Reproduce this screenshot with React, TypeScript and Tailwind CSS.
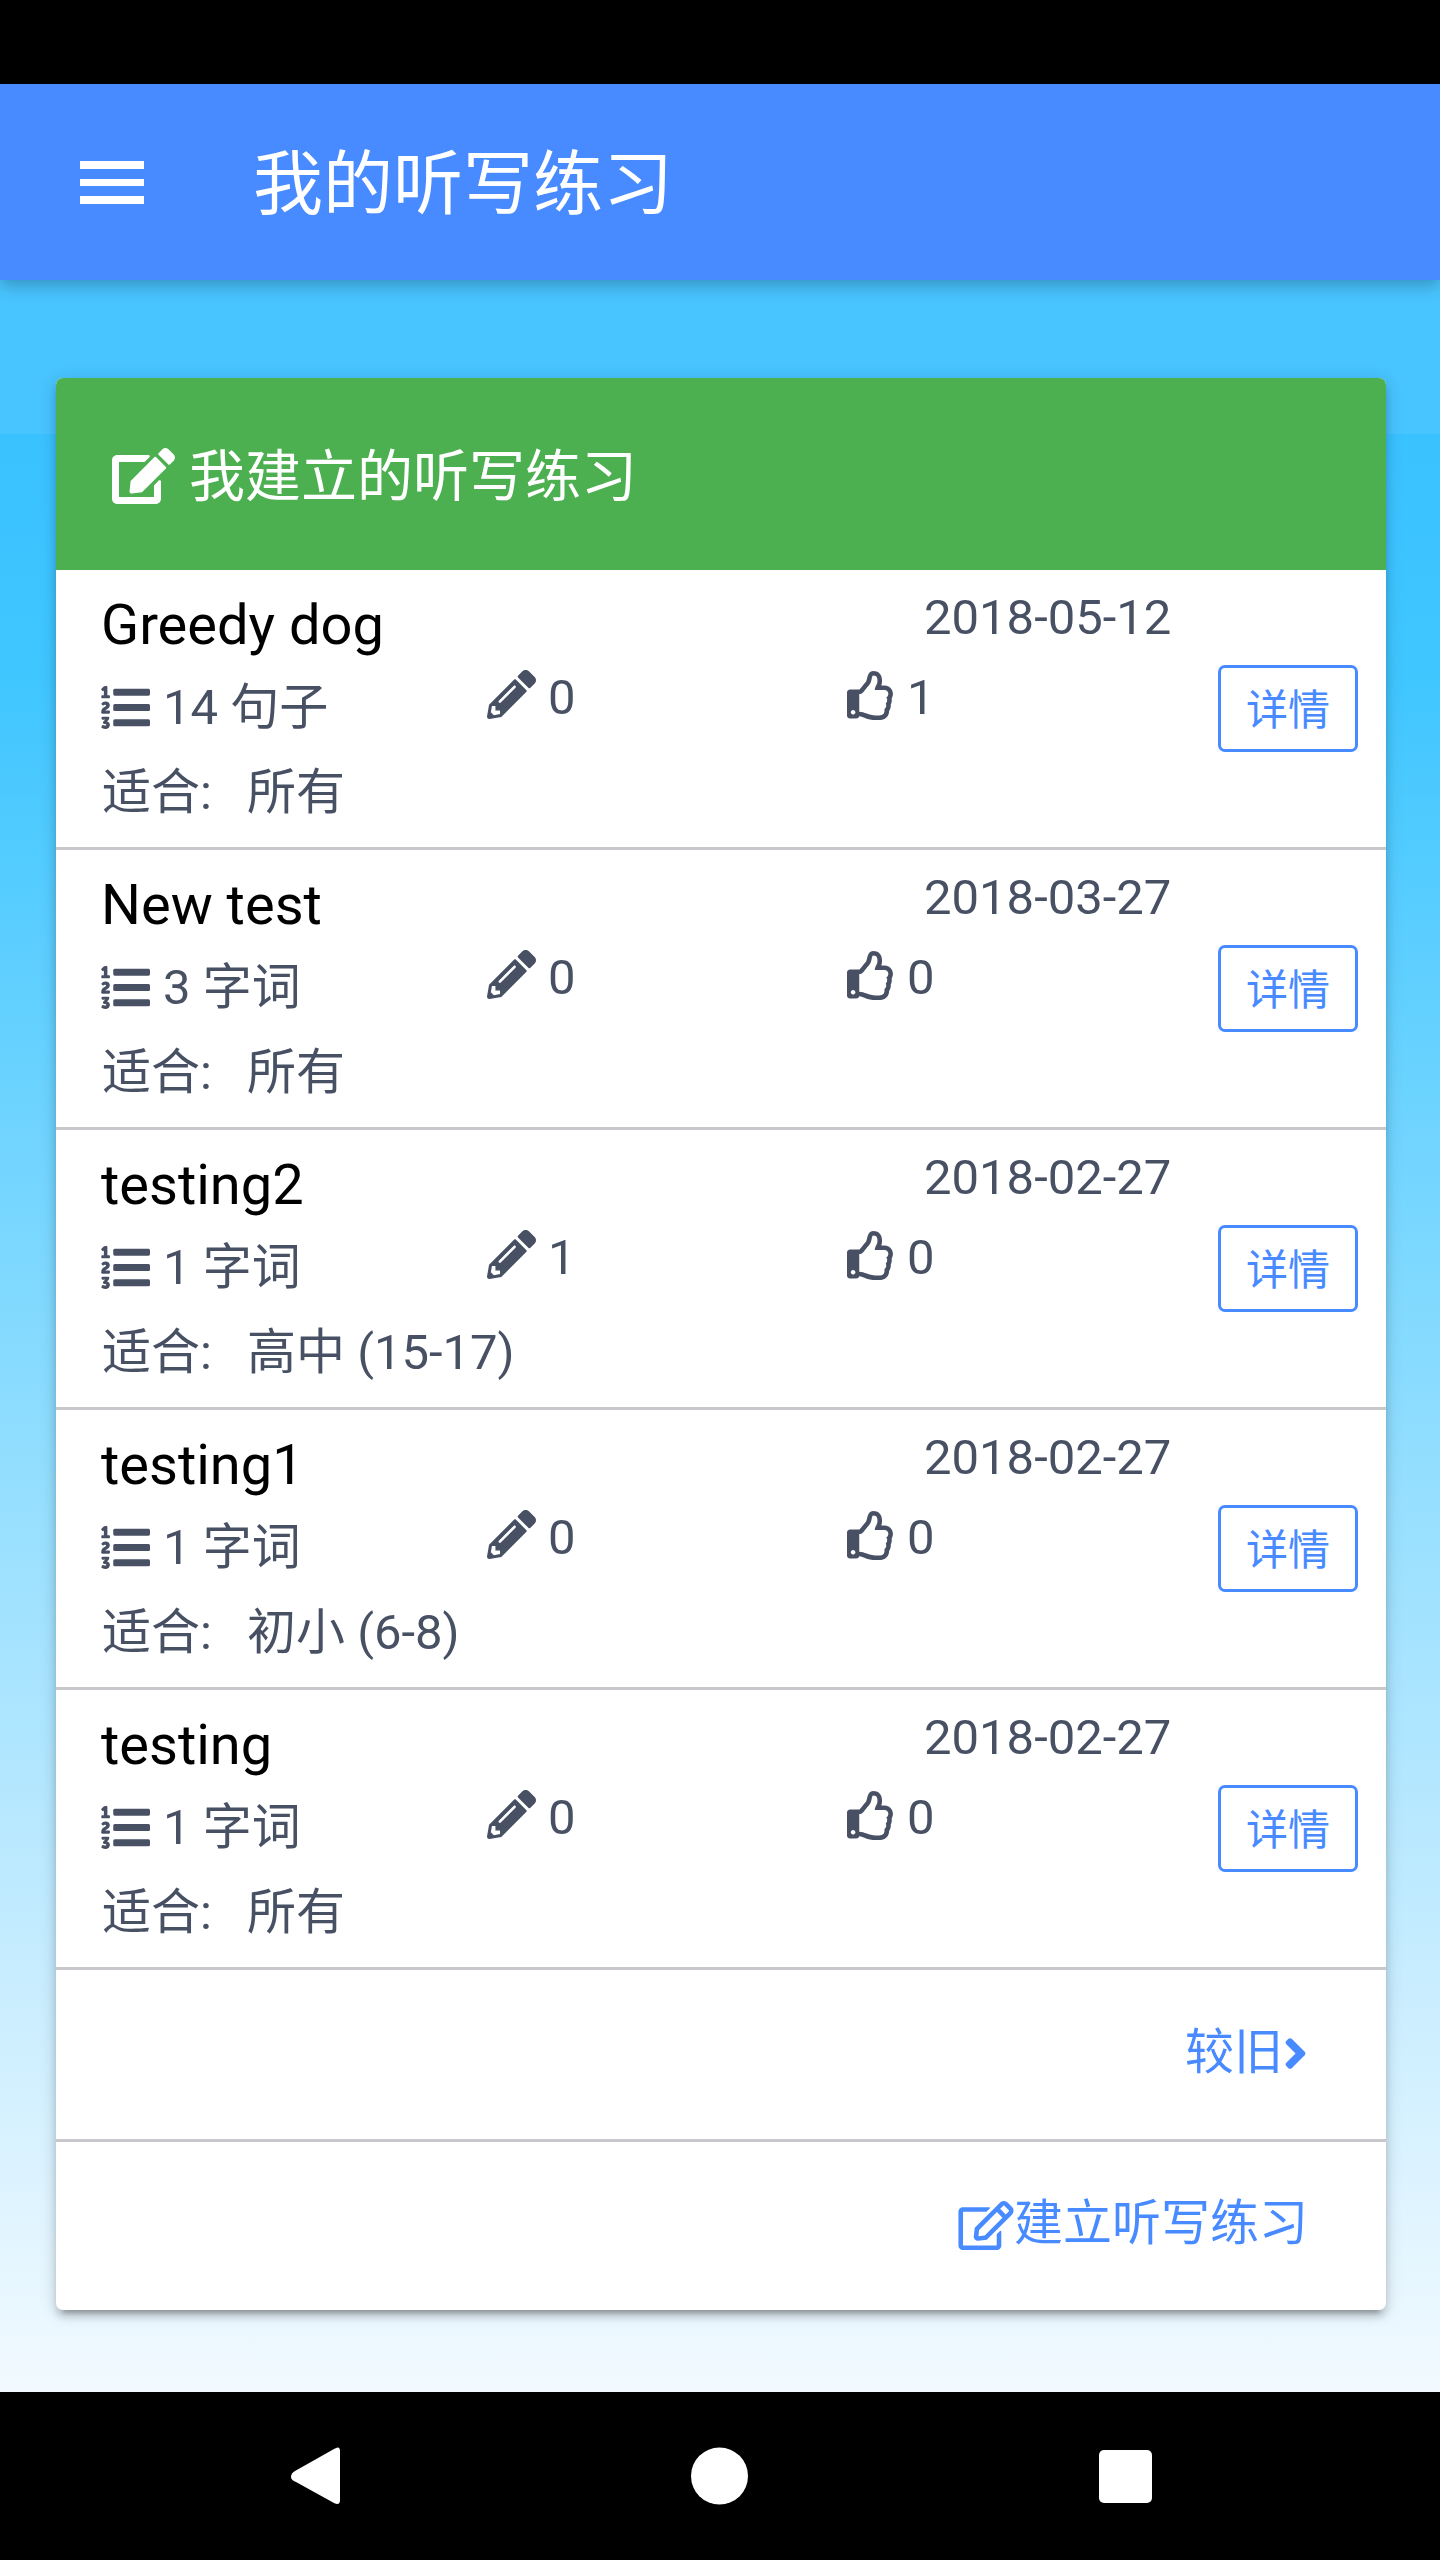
import type { ReactNode } from "react";
import { FaEdit, FaRegEdit, FaPencilAlt, FaRegThumbsUp, FaAngleRight } from "react-icons/fa";

const exercises = [
  { title: "Greedy dog", count: "14 句子", level: "所有", tries: 0, likes: 1, date: "2018-05-12" },
  { title: "New test", count: "3 字词", level: "所有", tries: 0, likes: 0, date: "2018-03-27" },
  { title: "testing2", count: "1 字词", level: "高中 (15-17)", tries: 1, likes: 0, date: "2018-02-27" },
  { title: "testing1", count: "1 字词", level: "初小 (6-8)", tries: 0, likes: 0, date: "2018-02-27" },
  { title: "testing", count: "1 字词", level: "所有", tries: 0, likes: 0, date: "2018-02-27" },
];

type Exercise = (typeof exercises)[number];

function ListIcon() {
  return (
    <svg viewBox="0 0 512 512" className="-mt-[2px] size-[49px] shrink-0 fill-current">
      <path d="M3.263 139.527c0-7.477 3.917-11.572 11.573-11.572h15.131V88.078c0-5.163.534-10.503.534-10.503h-.356s-1.779 2.67-2.848 3.738c-4.451 4.273-10.504 4.451-15.666-1.068l-5.518-6.231c-5.342-5.341-4.984-11.216.534-16.379l21.72-19.938C32.815 33.602 36.732 32 42.785 32H54.89c7.656 0 11.749 3.916 11.749 11.572v84.384h15.488c7.655 0 11.572 4.094 11.572 11.572v8.901c0 7.477-3.917 11.572-11.572 11.572H14.836c-7.656 0-11.573-4.095-11.573-11.572v-8.902z" />
      <path d="M2.211 304.591c0-47.278 50.955-56.383 50.955-69.165 0-7.18-5.954-8.755-9.28-8.755-3.153 0-6.479 1.051-9.455 3.852-5.079 4.903-10.507 7.004-16.111 2.451l-8.579-6.829c-5.779-4.553-7.18-9.805-2.803-15.409C13.592 201.981 26.025 192 47.387 192c19.437 0 44.476 10.506 44.476 39.573 0 38.347-46.753 46.402-48.679 56.909h39.049c7.529 0 11.557 4.027 11.557 11.382v8.755c0 7.354-4.028 11.382-11.557 11.382h-67.94c-7.005 0-12.083-4.028-12.083-11.382v-4.028z" />
      <path d="M5.654 454.61l5.603-9.28c3.853-6.654 9.105-7.004 15.584-3.152 4.903 2.101 9.63 3.152 14.359 3.152 10.155 0 14.358-3.502 14.358-8.23 0-6.654-5.604-9.106-15.934-9.106h-4.728c-5.954 0-9.28-2.101-12.258-7.88l-1.05-1.926c-2.451-4.728-1.226-9.806 2.801-14.884l5.604-7.004c6.829-8.405 12.257-13.483 12.257-13.483v-.35s-4.203 1.051-12.608 1.051H16.685c-7.53 0-11.383-4.028-11.383-11.382v-8.755c0-7.53 3.853-11.382 11.383-11.382h58.484c7.529 0 11.382 4.027 11.382 11.382v3.327c0 5.778-1.401 9.806-5.079 14.183l-17.509 20.137c19.611 5.078 28.716 20.487 28.716 34.845 0 21.363-14.358 44.126-48.503 44.126-16.636 0-28.192-4.728-35.896-9.455-5.779-4.202-6.304-9.805-2.626-15.934z" />
      <rect x="128" y="60" width="384" height="72" rx="16" />
      <rect x="128" y="220" width="384" height="72" rx="16" />
      <rect x="128" y="380" width="384" height="72" rx="16" />
    </svg>
  );
}

function Row({ item }: { item: Exercise }) {
  return (
    <div className="flex h-[280px] border-b-[3px] border-[#c8c7cc] pl-[45px] text-[49px] leading-[58px] text-[#485064]">
      <div className="flex w-[386px] flex-col whitespace-nowrap">
        <h2 className="mt-[22px] text-[56px] leading-[66px] text-black">{item.title}</h2>
        <div className="mt-[21px] flex items-center gap-[13px]">
          <ListIcon />
          <span>{item.count}</span>
        </div>
        <div className="mt-[27px] flex pl-[1px]">
          <span className="w-[145px] shrink-0">适合:</span>
          <span>{item.level}</span>
        </div>
      </div>
      <div className="flex w-[360px] items-start gap-[12px] pt-[99px]">
        <FaPencilAlt className="mt-[1px] size-[49px]" />
        <span>{item.tries}</span>
      </div>
      <div className="w-[371px]">
        <div className="mt-[19px] pl-[77px]">{item.date}</div>
        <div className="mt-[22px] flex items-start gap-[11px]">
          <FaRegThumbsUp className="mt-[2px] size-[49px]" />
          <span>{item.likes}</span>
        </div>
      </div>
      <button className="mt-[95px] flex h-[87px] w-[140px] items-center justify-center rounded-[7px] border-[3px] border-[#488aff] pt-[4px] text-[42px] leading-[48px] text-[#488aff]">
        详情
      </button>
    </div>
  );
}

function FooterLink({ children }: { children: ReactNode }) {
  return <div className="flex items-center justify-end pr-[78px] text-[49px] leading-[58px] text-[#488aff]">{children}</div>;
}

export default function App() {
  return (
    <div className="flex h-[2560px] w-[1440px] flex-col overflow-hidden bg-black font-[Roboto,'Noto_Sans_CJK_SC',sans-serif]">
      <header className="z-10 mt-[84px] flex h-[196px] shrink-0 items-center bg-[#488aff] text-white shadow-[0_5px_16px_rgba(0,0,0,0.26)]">
        <div className="ml-[80px] mt-[1px] flex w-[64px] flex-col gap-[10px]">
          <span className="h-[8px] bg-white" />
          <span className="h-[7px] bg-white" />
          <span className="h-[8px] bg-white" />
        </div>
        <h1 className="ml-[109px] mt-[6px] text-[70px] leading-[84px]">我的听写练习</h1>
      </header>
      <main className="h-[2112px] bg-[linear-gradient(to_bottom,#48c4ff_0,#48c4ff_154px,#3ac2ff_154px,#40c6ff_400px,#80d9ff_1009px,#c8edff_1698px,#f2faff_2112px)] px-[56px] pt-[98px]">
        <section className="h-[1932px] w-[1330px] overflow-hidden rounded-[7px] bg-white shadow-[0_7px_7px_rgba(0,0,0,0.14),0_10px_4px_-7px_rgba(0,0,0,0.2),0_3px_17px_rgba(0,0,0,0.16)]">
          <div className="flex h-[192px] items-center bg-[#4caf50] pl-[56px] pt-[4px] text-[56px] leading-[66px] text-white">
            <FaEdit className="h-[56px] w-[63px]" />
            <span className="ml-[14px] mt-[2px]">我建立的听写练习</span>
          </div>
          {exercises.map((item) => (
            <Row key={item.title} item={item} />
          ))}
          <div className="h-[172px] border-b-[3px] border-[#c8c7cc] pt-[54px]">
            <FooterLink>
              较旧
              <FaAngleRight className="h-[49px] w-[25px]" />
            </FooterLink>
          </div>
          <div className="pt-[53px]">
            <FooterLink>
              <FaRegEdit className="mt-[3px] h-[49px] w-[56px]" />
              建立听写练习
            </FooterLink>
          </div>
        </section>
      </main>
      <nav className="flex h-[168px] shrink-0 items-center bg-black">
        <svg viewBox="0 0 1440 168" className="h-[168px] w-full fill-white">
          <path d="M291 85Q291 81 295 79L334 57Q340 53 340 59V108Q340 114 334 111L296 90Q291 88 291 85Z" />
          <circle cx="719.5" cy="84" r="28.5" />
          <rect x="1099" y="58" width="53" height="53" rx="5" />
        </svg>
      </nav>
    </div>
  );
}
